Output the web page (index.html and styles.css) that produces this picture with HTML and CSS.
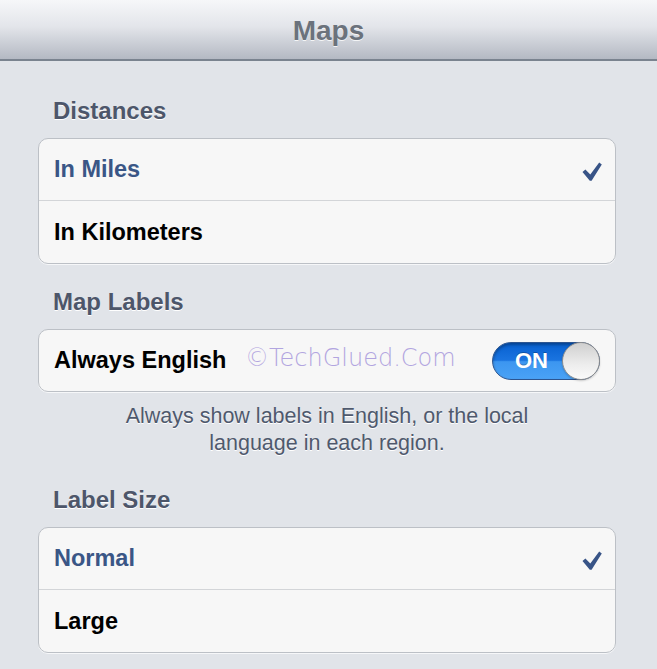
FILE: index.html
```html
<!DOCTYPE html>
<html lang="en">
<head>
  <meta charset="UTF-8" />
  <meta name="viewport" content="width=device-width, initial-scale=1.0"/>
  <title>Maps Settings</title>
  <link rel="stylesheet" href="styles.css">
</head>
<body>

  <header class="navbar">
    <h1>Maps</h1>
  </header>

  <main class="settings">
    <section class="group">
      <h2 class="group-title">Distances</h2>
      <ul class="cells">
        <li class="cell selected">
          <span>In Miles</span>
          <svg class="check" width="20" height="20" viewBox="0 0 20 20" aria-hidden="true">
            <path d="M0.5 10 L3.4 7.6 L8.3 12.6 L17.2 0.5 L19.8 2.4 L9.6 18.8 L7.8 18.8 Z" fill="#385487"/>
          </svg>
        </li>
        <li class="cell">
          <span>In Kilometers</span>
        </li>
      </ul>
    </section>

    <section class="group">
      <h2 class="group-title">Map Labels</h2>
      <ul class="cells">
        <li class="cell">
          <span>Always English</span>
          <span class="watermark">©TechGlued.Com</span>
          <div class="switch on">
            <span class="switch-label">ON</span>
            <span class="knob"></span>
          </div>
        </li>
      </ul>
      <p class="footnote">Always show labels in English, or the local<br>language in each region.</p>
    </section>

    <section class="group">
      <h2 class="group-title">Label Size</h2>
      <ul class="cells">
        <li class="cell selected">
          <span>Normal</span>
          <svg class="check" width="20" height="20" viewBox="0 0 20 20" aria-hidden="true">
            <path d="M0.5 10 L3.4 7.6 L8.3 12.6 L17.2 0.5 L19.8 2.4 L9.6 18.8 L7.8 18.8 Z" fill="#385487"/>
          </svg>
        </li>
        <li class="cell">
          <span>Large</span>
        </li>
      </ul>
    </section>
  </main>

</body>
</html>
```

FILE: styles.css
```css
:root {
  --bg-color: #e1e4e9;
  --cell-bg: #f7f7f7;
  --cell-border: #bcc0c6;
  --divider: #d3d5d8;
  --title-color: #4d566a;
  --selected-color: #3a5686;
  --note-color: #4f596d;
}

* {
  margin: 0;
  padding: 0;
  box-sizing: border-box;
}

body {
  font-family: 'Liberation Sans', Arial, sans-serif;
  background: var(--bg-color);
  color: #000;
  width: 657px;
  height: 669px;
  overflow: hidden;
}

.navbar {
  height: 61px;
  background: linear-gradient(#f6f7f9, #e3e5ea 45%, #b4b9c3);
  border-bottom: 2px solid #7a838f;
  display: flex;
  align-items: center;
  justify-content: center;
}

.navbar h1 {
  font-size: 28px;
  font-weight: bold;
  color: #6b727c;
  text-shadow: 0 1px 0 rgba(255, 255, 255, 0.8);
  margin-top: 2px;
}

.settings {
  padding: 12px 41px 0 38px;
}

.group-title {
  font-size: 24px;
  font-weight: bold;
  line-height: 26px;
  color: var(--title-color);
  text-shadow: 0 1px 0 #fff;
  padding: 25px 0 14px 15px;
}

.cells {
  list-style: none;
  background: var(--cell-bg);
  border: 1px solid var(--cell-border);
  border-radius: 10px;
  box-shadow: 0 1px 0 rgba(255, 255, 255, 0.7);
}

.cell {
  position: relative;
  height: 61px;
  display: flex;
  align-items: center;
  justify-content: space-between;
  padding: 0 13px 0 15px;
  font-size: 23.5px;
  font-weight: bold;
}

.cell + .cell {
  border-top: 1px solid var(--divider);
  height: 63px;
}

.cell.selected {
  color: var(--selected-color);
}

.check {
  margin-top: 4px;
}

.watermark {
  position: absolute;
  left: 206px;
  top: 14px;
  font-family: 'DejaVu Sans', sans-serif;
  font-weight: 200;
  font-size: 24px;
  color: #b2a5e0;
}

.switch {
  position: relative;
  width: 108px;
  height: 38px;
  margin-right: 2px;
  border-radius: 19px;
  border: 1px solid #2c5590;
  background: linear-gradient(#0760d0, #1a74e0 48%, #3c96f0 52%, #4aa2f5);
  box-shadow: inset 0 2px 3px rgba(0, 0, 0, 0.3);
  display: flex;
  align-items: center;
}

.switch-label {
  color: #fff;
  font-size: 22px;
  font-weight: bold;
  margin-left: 22px;
  text-shadow: 0 -1px 0 rgba(0, 0, 0, 0.25);
}

.knob {
  position: absolute;
  right: -1px;
  top: -1px;
  width: 38px;
  height: 38px;
  border-radius: 50%;
  border: 1px solid #8e8e8e;
  background: linear-gradient(#cfcfcf, #ededed 60%, #fafafa);
  box-shadow: 0 1px 2px rgba(0, 0, 0, 0.2);
}

.footnote {
  text-align: center;
  font-size: 21.5px;
  line-height: 27px;
  color: var(--note-color);
  text-shadow: 0 1px 0 #fff;
  margin: 11px 0 5px;
}
```
